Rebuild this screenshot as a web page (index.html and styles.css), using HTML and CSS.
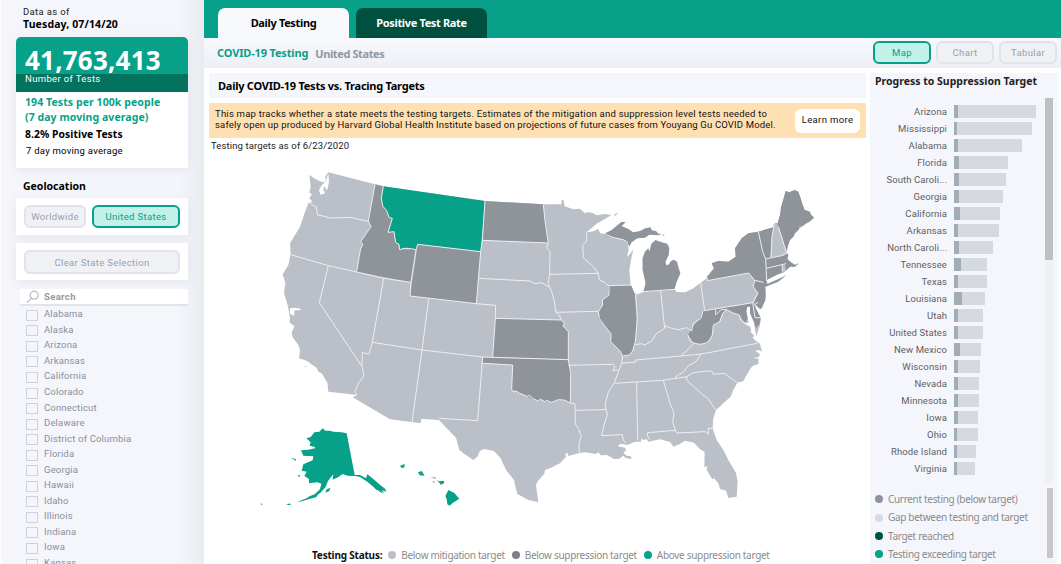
FILE: index.html
```html
<!DOCTYPE html>
<html lang="en">
  <head>
    <meta charset="UTF-8" />
    <meta name="viewport" content="width=device-width, initial-scale=1.0" />
    <title>COVID-19 Testing Dashboard</title>
    <link rel="stylesheet" href="styles.css">
  </head>
  <body>
    <div class="dashboard">
      <aside class="sidebar">
        <p class="date-label">Data as of</p>
        <p class="date">Tuesday, 07/14/20</p>

        <div class="card">
          <div class="card-total">41,763,413</div>
          <div class="card-caption">Number of Tests</div>
          <div class="card-body">
            <p class="rate">194 Tests per 100k people<br>(7 day moving average)</p>
            <p class="positive">8.2% Positive Tests</p>
            <p class="note">7 day moving average</p>
          </div>
        </div>

        <h2 class="geo-title">Geolocation</h2>
        <div class="panel">
          <button class="btn world">Worldwide</button>
          <button class="btn active us">United States</button>
        </div>
        <div class="panel">
          <button class="btn clear">Clear State Selection</button>
        </div>

        <div class="search">
          <svg width="14" height="14" viewBox="0 0 14 14" fill="none" stroke="#b9bcc1" stroke-width="1.2">
            <circle cx="8.2" cy="5.2" r="4" />
            <path d="M5.3 8.2L1 12.5" />
          </svg>
          <span>Search</span>
        </div>
        <ul class="state-list">
          <li><i></i>Alabama</li>
          <li><i></i>Alaska</li>
          <li><i></i>Arizona</li>
          <li><i></i>Arkansas</li>
          <li><i></i>California</li>
          <li><i></i>Colorado</li>
          <li><i></i>Connecticut</li>
          <li><i></i>Delaware</li>
          <li><i></i>District of Columbia</li>
          <li><i></i>Florida</li>
          <li><i></i>Georgia</li>
          <li><i></i>Hawaii</li>
          <li><i></i>Idaho</li>
          <li><i></i>Illinois</li>
          <li><i></i>Indiana</li>
          <li><i></i>Iowa</li>
          <li><i></i>Kansas</li>
        </ul>
      </aside>

      <main class="main">
        <nav class="tabs">
          <a class="tab current">Daily Testing</a>
          <a class="tab">Positive Test Rate</a>
        </nav>
        <header class="subheader">
          <h1>COVID-19 Testing</h1>
          <span class="region">United States</span>
          <div class="views">
            <button class="btn active">Map</button>
            <button class="btn">Chart</button>
            <button class="btn">Tabular</button>
          </div>
        </header>

        <div class="content">
          <section class="map-area">
            <h2 class="map-title">Daily COVID-19 Tests vs. Tracing Targets</h2>
            <div class="notice">
              <p>This map tracks whether a state meets the testing targets. Estimates of the mitigation and suppression level tests needed to<br><span class="source">safely open up produced by Harvard Global Health Institute based on projections of future cases from Youyang Gu COVID Model.</span></p>
              <button class="learn">Learn more</button>
            </div>
            <p class="as-of">Testing targets as of 6/23/2020</p>

            <svg class="map" viewBox="-153 0 1971 1155">
              <!-- lower 48 -->
              <path class="light" d="M148 60L165 71 183 80 194 82 198 74 195 66 205 52 345 88 370 94 675 138 850 148 904 148 905 134 911 136 914 154 927 158 940 163 960 161 966 167 975 175 985 171 1000 175 1010 181 1035 177 1055 180 1030 194 1008 208 980 232 1000 229 1015 222 1020 234 1036 238 1062 248 1090 254 1103 262 1106 285 1101 306 1112 295 1120 282 1114 310 1108 345 1112 390 1120 412 1130 418 1150 410 1157 385 1148 345 1148 310 1155 290 1165 280 1168 290 1175 265 1185 255 1205 262 1222 270 1226 295 1216 322 1220 332 1240 314 1252 320 1261 355 1250 380 1243 402 1250 411 1275 412 1300 400 1322 383 1342 368 1362 340 1355 325 1375 318 1405 320 1427 305 1425 280 1445 250 1465 235 1495 230 1540 217 1542 206 1548 203 1555 206 1560 180 1568 140 1577 108 1588 112 1603 105 1615 110 1628 150 1634 165 1650 170 1652 178 1662 188 1648 200 1630 212 1618 222 1605 235 1600 245 1590 255 1583 275 1580 293 1585 300 1582 312 1593 322 1605 330 1615 325 1612 318 1616 326 1605 335 1590 335 1580 345 1570 353 1550 360 1520 375 1510 380 1516 392 1517 400 1516 435 1505 460 1500 462 1484 448 1490 465 1502 488 1500 510 1488 545 1482 515 1472 482 1470 455 1462 455 1459 470 1463 490 1466 505 1448 500 1458 510 1474 516 1478 528 1470 530 1483 541 1478 548 1490 560 1500 566 1506 590 1498 585 1486 588 1500 598 1496 607 1480 608 1496 612 1495 627 1478 633 1472 640 1460 660 1450 678 1432 683 1420 705 1412 725 1398 737 1385 750 1368 765 1360 790 1358 820 1370 855 1390 885 1405 915 1428 953 1433 980 1430 1025 1405 1029 1398 1007 1380 1002 1375 985 1362 970 1357 973 1340 945 1342 934 1333 937 1334 890 1320 883 1302 863 1275 857 1258 868 1240 875 1230 861 1200 853 1165 860 1160 852 1150 856 1145 848 1143 860 1125 860 1102 870 1082 866 1073 874 1095 878 1098 886 1090 893 1100 902 1112 903 1115 912 1098 910 1090 902 1078 911 1062 912 1040 900 1022 901 1015 891 1008 897 975 892 955 895 925 903 923 895 916 896 918 906 900 925 873 938 855 945 853 956 832 980 828 990 830 1005 835 1042 805 1035 772 1017 765 990 762 975 750 960 738 945 722 910 702 888 672 882 660 887 652 905 640 915 610 895 598 885 588 848 560 820 537 795 484 791 482 805 390 793 278 727 292 720 205 710 202 683 185 655 175 650 170 638 150 625 140 617 117 610 120 585 115 570 97 545 95 533 103 514 88 502 90 490 85 460 80 440 72 415 76 385 68 358 85 330 92 295 90 265 105 240 120 215 135 170 145 145 157 140 148 130 156 117 148 113 152 95Z" />

              <!-- below suppression -->
              <g class="dark">
                <path d="M345 88L370 94 364 130 380 155 397 190 384 232 402 230 419 283 468 284 453 382 290 350 301 285 308 268 302 260 332 215 325 198Z" />
                <path d="M473 268L662 290 649 446 450 423Z" />
                <path d="M675 138L850 148 855 198 865 264 667 256Z" />
                <path d="M706 490L904 495 913 504 909 513 925 530 925 614 698 606Z" />
                <path d="M668 606L925 614 932 655 931 742 912 735 895 734 875 742 868 737 855 741 848 733 834 738 800 724 788 718 770 708 755 705 758 630 667 624Z" />
                <path d="M1043 392L1113 390 1125 418 1130 490 1126 560 1118 586 1108 600 1088 603 1080 588 1052 560 1053 536 1035 514 1015 490 1018 465 1028 450 1027 435 1047 420Z" />
                <path d="M1036 235L1055 225 1072 211 1085 200 1097 202 1085 213 1105 222 1120 232 1140 228 1156 220 1172 217 1175 226 1188 228 1195 236 1205 236 1195 241 1168 239 1155 248 1132 250 1115 262 1108 275 1102 262 1090 254 1062 248 1036 242ZM1204 239L1215 239 1210 242Z" />
                <path d="M1150 410L1157 385 1148 345 1148 310 1155 290 1165 280 1168 290 1175 265 1185 255 1205 262 1222 266 1228 280 1226 300 1216 322 1220 332 1229 328 1232 319 1242 314 1250 320 1255 340 1261 355 1250 380 1243 404Z" />
                <path d="M1342 377L1340 366 1362 340 1355 325 1375 318 1405 320 1427 305 1425 280 1445 250 1465 235 1495 230 1540 217 1542 206 1552 206 1560 180 1563 155 1568 140 1577 108 1588 112 1603 105 1615 110 1622 130 1628 150 1634 165 1650 170 1652 178 1662 188 1648 200 1635 206 1630 212 1618 214 1616 224 1605 235 1600 245 1590 255 1583 275 1580 293 1585 300 1582 312 1593 322 1605 330 1615 325 1605 335 1590 335 1580 345 1550 360 1520 375 1523 386 1560 370 1580 360 1555 380 1515 396 1517 415 1516 435 1505 460 1500 462 1482 444 1494 415 1480 395 1484 376 1466 354 1342 377Z" />
                <path d="M1329 467L1365 463 1480 444 1490 465 1502 488 1500 505 1488 520 1482 500 1470 482 1470 455 1461 455 1459 470 1463 490 1456 505 1438 480 1425 476 1400 464 1388 475 1375 503 1360 510 1357 540 1340 565 1320 568 1300 562 1284 540 1298 515 1320 490Z" />
              </g>
              <path class="light" d="M1540 217L1548 203 1553 210 1579 285 1582 295 1570 302 1532 307 1536 245ZM1566 332L1574 328 1578 345 1570 353Z" />

              <!-- above suppression -->
              <g class="green">
                <path d="M370 94L675 138 662 290 473 268 470 285 460 282 455 285 445 280 432 280 419 284 417 268 407 262 402 230 384 232 397 190 387 187 380 167 368 153 364 130Z" />
                <path d="M188 820L196 827 210 827 220 830 245 832 260 835 284 960 300 960 318 970 322 958 340 972 358 988 376 1002 379 1010 366 1005 374 1014 356 1006 345 1000 322 980 300 966 285 963 262 962 248 957 234 967 218 974 220 958 204 978 197 996 180 1015 155 1026 180 1003 184 986 173 982 147 985 147 972 133 963 140 950 125 947 130 928 158 916 160 904 130 902 123 886 145 884 165 880 164 876 149 872 152 862 139 850 152 846 163 832 178 830Z" />
                <path d="M160 1019L176 1017 168 1027 148 1032 114 1042 120 1037 140 1030 150 1023ZM93 909L107 912 109 918ZM200 1003L211 998 208 1008 196 1013ZM78 1050L90 1045 92 1050ZM0 1046L8 1046 6 1050ZM112 961L122 961 118 966ZM218 968L232 956 236 965Z" />
                <path d="M420 932L434 927 433 938 424 938ZM474 952L485 948 494 962 479 961ZM510 966L528 968 527 971ZM518 980L524 979 522 984ZM530 974L537 979 551 977 553 984 543 989ZM565 1005L583 1014 598 1031 579 1043 569 1052 562 1048 560 1032 556 1023Z" />
                <path class="islands" d="M326 975L337 987 344 992M333 982L350 1003 369 1015M343 982L357 997 369 1006M345 1000L362 1009" />
              </g>

              <!-- state lines -->
              <g class="borders">
                <path d="M345 88L325 198 333 215 302 260 308 268 301 285 290 350" />
                <path d="M148 143L158 150 169 156 173 180 193 184 210 189 270 187 325 199" />
                <path d="M92 299L205 332 290 351 371 370 453 382M371 370L337 562 327 598 307 592 306 632 312 663 296 683 285 710 291 720" />
                <path d="M205 332L178 443 304 632M337 562L486 585 668 606 925 614M506 432L486 585 456 802" />
                <path d="M370 94L364 130 368 153 380 167 387 187 397 190 384 232 402 230 407 262 417 268 419 284 432 280 445 280 460 282 468 285 453 382 450 423 649 446 707 451 706 490 698 606" />
                <path d="M468 285L473 268 662 290M675 138L667 256 662 290 649 446M667 256L865 264M656 370L810 378 825 386 845 383 867 396" />
                <path d="M850 148L855 198 865 264 860 278 870 290 869 358 864 385 875 410 883 438 888 472 898 480 904 495 913 504 909 513 925 530 925 614 932 655 931 744" />
                <path d="M706 490L904 495M869 358L1015 355M888 472L1015 469M668 606L653 797 537 790" />
                <path d="M667 625L758 630 755 705 762 711 770 708 778 716 788 718 800 724 808 721 820 731 834 738 841 732 848 737 855 741 861 735 868 741 875 742 895 734 912 735 931 744 945 746 946 807 955 820 964 845 957 865 958 893M946 766L1038 764" />
                <path d="M925 631L1060 628 1065 636 1058 647 1075 645M980 232L980 258 968 270 970 308 1000 335 1015 355 1018 375 1035 383 1047 395 1047 420 1027 435 1028 450 1015 470 1018 490 1035 514 1053 536 1052 560 1080 588 1088 603 1085 624 1078 643 1062 685 1045 712 1035 750 1042 780 1032 810 1025 842 1087 839 1090 855 1097 864" />
                <path d="M1036 238L1062 248 1090 254 1103 262M1043 392L1113 390M1127 418L1132 490 1126 560 1118 588 1108 600 1090 603M1126 569L1145 566 1155 570 1175 558 1190 535 1214 520 1216 512 1235 520 1255 524 1280 518 1295 528 1300 505 1323 490 1329 467" />
                <path d="M1130 418L1150 410 1202 406 1245 403M1202 406L1214 520M1322 384L1334 467M1342 368L1342 377 1466 354 1484 376 1510 382M1334 467L1478 443 1494 415 1480 395 1484 376M1494 442L1484 448M1478 443L1485 488 1502 488" />
                <path d="M1085 625L1127 621 1127 615 1262 603 1325 597 1492 565M1065 685L1208 676 1282 665M1130 682L1132 800 1133 855M1210 676L1230 745 1242 775 1238 800 1246 825 1250 834 1335 830 1345 838 1345 820 1358 820M1246 826L1163 833 1162 842 1170 855" />
                <path d="M1280 665L1300 653 1340 648 1355 649 1360 658 1392 655 1432 683M1280 665L1280 675 1300 694 1325 716 1345 732 1360 755 1368 765M1322 598L1308 620 1285 632 1270 652 1250 662 1246 670" />
                <path d="M1262 603L1284 583 1302 565M1284 540L1290 558 1302 565 1322 568 1335 565 1348 558 1357 540 1360 510 1380 500 1388 475 1400 464M1367 463L1367 480 1383 464 1400 464 1415 472 1425 476 1438 480 1442 495 1462 510" />
                <path d="M1495 230L1508 290 1517 312 1520 378M1533 307L1536 245 1544 203M1517 312L1565 302 1580 295 1555 215M1519 340L1578 326M1566 330L1568 350" />
              </g>

              <!-- inlets and bays -->
              <g class="water">
                <path d="M198 78L186 90 177 105 181 119 195 115 193 100 202 105 207 80 205 55ZM90 460L105 458 123 462 121 466 104 466 102 482 90 476Z" />
                <path d="M1165 282L1175 264 1185 258 1180 250 1155 255ZM1465 455L1470 475 1481 500 1489 547 1474 530 1467 495 1461 470Z" />
                <path d="M1520 386L1540 374 1572 359 1572 354 1550 361 1522 376Z" />
              </g>
              <path class="light" d="M191 98L195 93 198 104 190 110ZM1060 180L1075 172 1067 182ZM133 633L143 634 135 636Z" />
            </svg>

            <div class="map-legend">
              <strong>Testing Status:</strong>
              <span><i class="dot mitigation"></i>Below mitigation target</span>
              <span><i class="dot suppression"></i>Below suppression target</span>
              <span><i class="dot above"></i>Above suppression target</span>
            </div>
          </section>

          <section class="progress">
            <h2>Progress to Suppression Target</h2>
            <div class="chart">
              <div class="rows">
                <div class="row"><span>Arizona</span><div class="bar" style="width: 82px"><i style="width: 4px"></i></div></div>
                <div class="row"><span>Mississippi</span><div class="bar" style="width: 78px"><i style="width: 3px"></i></div></div>
                <div class="row"><span>Alabama</span><div class="bar" style="width: 68.3px"><i style="width: 4px"></i></div></div>
                <div class="row"><span>Florida</span><div class="bar" style="width: 53.7px"><i style="width: 5px"></i></div></div>
                <div class="row"><span>South Caroli...</span><div class="bar" style="width: 51.7px"><i style="width: 4.5px"></i></div></div>
                <div class="row"><span>Georgia</span><div class="bar" style="width: 48.7px"><i style="width: 4.5px"></i></div></div>
                <div class="row"><span>California</span><div class="bar" style="width: 45.7px"><i style="width: 6px"></i></div></div>
                <div class="row"><span>Arkansas</span><div class="bar" style="width: 44.7px"><i style="width: 4px"></i></div></div>
                <div class="row"><span>North Caroli...</span><div class="bar" style="width: 39.3px"><i style="width: 5px"></i></div></div>
                <div class="row"><span>Tennessee</span><div class="bar" style="width: 33px"><i style="width: 6.7px"></i></div></div>
                <div class="row"><span>Texas</span><div class="bar" style="width: 32.7px"><i style="width: 4px"></i></div></div>
                <div class="row"><span>Louisiana</span><div class="bar" style="width: 31px"><i style="width: 8px"></i></div></div>
                <div class="row"><span>Utah</span><div class="bar" style="width: 29.3px"><i style="width: 4px"></i></div></div>
                <div class="row"><span>United States</span><div class="bar" style="width: 28.7px"><i style="width: 4px"></i></div></div>
                <div class="row"><span>New Mexico</span><div class="bar" style="width: 27px"><i style="width: 6.3px"></i></div></div>
                <div class="row"><span>Wisconsin</span><div class="bar" style="width: 26.3px"><i style="width: 4.3px"></i></div></div>
                <div class="row"><span>Nevada</span><div class="bar" style="width: 25px"><i style="width: 4px"></i></div></div>
                <div class="row"><span>Minnesota</span><div class="bar" style="width: 25px"><i style="width: 4.3px"></i></div></div>
                <div class="row"><span>Iowa</span><div class="bar" style="width: 24px"><i style="width: 4px"></i></div></div>
                <div class="row"><span>Ohio</span><div class="bar" style="width: 24px"><i style="width: 3px"></i></div></div>
                <div class="row"><span>Rhode Island</span><div class="bar" style="width: 22px"><i style="width: 2.7px"></i></div></div>
                <div class="row"><span>Virginia</span><div class="bar" style="width: 21px"><i style="width: 3px"></i></div></div>
              </div>
              <div class="scroll-track"><div class="scroll-thumb"></div></div>
            </div>
            <div class="progress-legend">
              <ul>
                <li><i class="dot current-testing"></i>Current testing (below target)</li>
                <li><i class="dot gap"></i>Gap between testing and target</li>
                <li><i class="dot reached"></i>Target reached</li>
                <li><i class="dot above"></i>Testing exceeding target</li>
              </ul>
              <div class="legend-thumb"></div>
            </div>
          </section>
        </div>
      </main>
    </div>
  </body>
</html>
```
FILE: styles.css
```css
* {
  box-sizing: border-box;
}

body {
  margin: 0;
  overflow: hidden;
  font-family: Roboto, Arial, sans-serif;
  font-size: 9.5px;
  letter-spacing: 0.35px;
  color: #222;
  background: #fff;
}

h1,
h2,
p,
ul {
  margin: 0;
  padding: 0;
}

ul {
  list-style: none;
}

button {
  font: inherit;
  letter-spacing: inherit;
  padding: 0;
}

.dashboard {
  display: flex;
  width: 1061px;
  height: 564px;
  overflow: hidden;
}

/* sidebar */
.sidebar {
  width: 204px;
  flex: none;
  padding: 5px 16px 0 15px;
  border-left: 1px solid #fff;
  background: linear-gradient(90deg, #f5f6fb 0, #f5f6fb 176px, #e8ebf1 204px);
}

.date-label {
  margin-left: 7px;
  line-height: 13px;
}

.date {
  margin-left: 7px;
  font: bold 10.5px/13px "Noto Sans", sans-serif;
  letter-spacing: 0.12px;
  color: #000;
}

.card {
  height: 131px;
  margin-top: 6px;
  border-radius: 5px 5px 0 0;
  overflow: hidden;
  background: #fff;
  box-shadow: 0 2px 10px #e2e5ed;
}

.card-total {
  height: 37px;
  padding: 9px 0 0 9px;
  background: #06a188;
  color: #fff;
  font: bold 26px/28px "Noto Sans", sans-serif;
  letter-spacing: 0.2px;
}

.card-caption {
  height: 18px;
  padding-left: 9px;
  background: #03725e;
  color: #fff;
  line-height: 10px;
}

.card-body {
  padding: 3px 9px;
  font-family: "Noto Sans", sans-serif;
  letter-spacing: 0.08px;
}

.rate {
  font-weight: bold;
  font-size: 10.5px;
  line-height: 15px;
  color: #06a188;
}

.positive {
  margin-top: 2px;
  font-weight: bold;
  font-size: 10.3px;
  line-height: 15px;
  color: #000;
}

.note {
  margin: 2px 0 0 1px;
  font: 9.5px/14px Roboto, sans-serif;
  letter-spacing: 0.25px;
  color: #000;
}

.geo-title {
  margin: 11px 0 5px 7px;
  font: bold 10.5px/14px "Noto Sans", sans-serif;
  letter-spacing: 0;
  color: #000;
}

.panel {
  display: flex;
  gap: 6px;
  height: 37px;
  padding: 7px 8px;
  margin-bottom: 8px;
  background: #fff;
  box-shadow: 0 2px 10px #e2e5ed;
}

.btn {
  height: 23px;
  border: 2px solid #e1e3e9;
  border-radius: 6px;
  background: #eff1f5;
  color: #9aa1ab;
}

.btn.active {
  border-color: #06a188;
  background: #c1f1e8;
  color: #06a188;
}

.world {
  width: 62px;
}

.us {
  width: 88px;
}

.clear {
  width: 157px;
  height: 24px;
}

.search {
  display: flex;
  align-items: center;
  gap: 4px;
  height: 17px;
  margin: 9px 0 0 4px;
  padding-left: 6px;
  border-bottom: 2px solid #e3e4e6;
  background: #fff;
  color: #999;
  font-weight: bold;
}

.state-list li {
  display: flex;
  align-items: center;
  height: 15.55px;
  padding-left: 10px;
  letter-spacing: 0.17px;
  color: #8590a0;
}

.state-list i {
  width: 12px;
  height: 11px;
  margin: 3px 6px 0 0;
  border: 1px solid #cfd2d6;
}

/* header */
.main {
  flex: 1;
  min-width: 0;
}

.tabs {
  display: flex;
  align-items: flex-end;
  gap: 7px;
  height: 38px;
  padding-left: 14px;
  background: #06a188;
}

.tab {
  width: 131px;
  height: 30px;
  border-radius: 7px 7px 0 0;
  background: #00503f;
  color: #fff;
  font: bold 11px/30px "Noto Sans", sans-serif;
  letter-spacing: -0.35px;
  text-align: center;
}

.tab.current {
  background: #f8f9fd;
  color: #000;
}

.subheader {
  display: flex;
  align-items: center;
  height: 30px;
  padding: 0 4px 0 13px;
  background: linear-gradient(#f8f9fd, #eeeff5);
}

.subheader h1,
.region {
  font: bold 11px/30px "Noto Sans", sans-serif;
  letter-spacing: -0.15px;
  color: #06a188;
}

.subheader .region {
  margin-left: 7px;
  padding-top: 1px;
  letter-spacing: -0.4px;
  color: #8f97a3;
}

.views {
  display: flex;
  gap: 5px;
  margin: -2px 0 0 auto;
}

.views .btn {
  width: 58px;
}

.content {
  display: flex;
  padding: 5px 4px 0 5px;
  gap: 4px;
}

.map-area {
  width: 657px;
}

.map-title {
  height: 25px;
  padding-left: 9px;
  background: #f5f6fb;
  font: bold 11px/26px "Noto Sans", sans-serif;
  letter-spacing: -0.25px;
  color: #000;
}

.notice {
  display: flex;
  align-items: center;
  justify-content: space-between;
  height: 35px;
  margin-top: 5px;
  padding: 0 6px 0 6px;
  background: #ffe0b2;
  color: #111;
}

.notice p {
  line-height: 11px;
  margin-top: -3px;
  white-space: nowrap;
  letter-spacing: 0.23px;
}

.notice .source {
  letter-spacing: 0.16px;
}

.learn {
  width: 65px;
  height: 24px;
  padding-bottom: 2px;
  border: 0;
  border-radius: 6px;
  background: #fff;
  color: #111;
}

.as-of {
  margin-left: 2px;
  line-height: 16px;
  padding-bottom: 1px;
  letter-spacing: 0.12px;
}

/* map */
.map {
  display: block;
  width: 657px;
  height: 385px;
}

.light {
  fill: #bbc0c8;
}

.dark {
  fill: #8f949b;
}

.green {
  fill: #06a188;
}

.islands {
  fill: none;
  stroke: #06a188;
  stroke-width: 3;
  stroke-dasharray: 9 3;
}

.borders {
  fill: none;
  stroke: #edeef0;
  stroke-width: 3;
  stroke-linejoin: round;
}

.water {
  fill: #fff;
}

.map-legend {
  display: flex;
  align-items: center;
  height: 20px;
  margin-top: 5px;
  padding-left: 103px;
  font: 10px/20px "Noto Sans", sans-serif;
  letter-spacing: -0.31px;
  color: #8a8a8a;
}

.map-legend strong {
  color: #111;
  margin-right: 6px;
  letter-spacing: -0.2px;
}

.map-legend span {
  display: flex;
  align-items: center;
  margin-right: 7px;
}

.dot {
  width: 8px;
  height: 8px;
  margin-right: 5px;
  border-radius: 50%;
}

.mitigation {
  background: #bbc0c8;
}

.suppression {
  background: #7b8087;
}

.above {
  background: #06a188;
}

/* progress chart */
.progress {
  width: 187px;
  height: 490px;
  background: #f5f6fb;
}

.progress h2 {
  height: 25px;
  padding-left: 5px;
  font: bold 10.5px/16px "Noto Sans", sans-serif;
  letter-spacing: 0;
  color: #222;
}

.chart {
  display: flex;
  justify-content: space-between;
  height: 385px;
  padding-right: 4px;
}

.rows {
  padding-top: 5px;
}

.row {
  display: flex;
  align-items: center;
  height: 17px;
}

.row span {
  width: 77px;
  margin-right: 7px;
  text-align: right;
  letter-spacing: 0.1px;
  color: #5f6062;
}

.bar {
  height: 13px;
  background: #d5dae1;
}

.bar i {
  display: block;
  height: 13px;
  background: #a3adb8;
}

.scroll-track {
  width: 8px;
  background: #eef0f2;
}

.scroll-thumb {
  height: 162px;
  background: #bebfc1;
}

.progress-legend {
  display: flex;
  justify-content: space-between;
  padding: 5px 4px 0 5px;
  font: 10px/18.4px "Noto Sans", sans-serif;
  letter-spacing: -0.32px;
  color: #8a8a8a;
}

.progress-legend ul {
  padding-top: 2px;
}

.progress-legend li {
  display: flex;
  align-items: center;
  height: 18.4px;
}

.legend-thumb {
  width: 6px;
  height: 70px;
  background: #c8c8c8;
}

.current-testing {
  background: #8b939f;
}

.gap {
  background: #d5dae1;
}

.reached {
  background: #00503f;
}
```
